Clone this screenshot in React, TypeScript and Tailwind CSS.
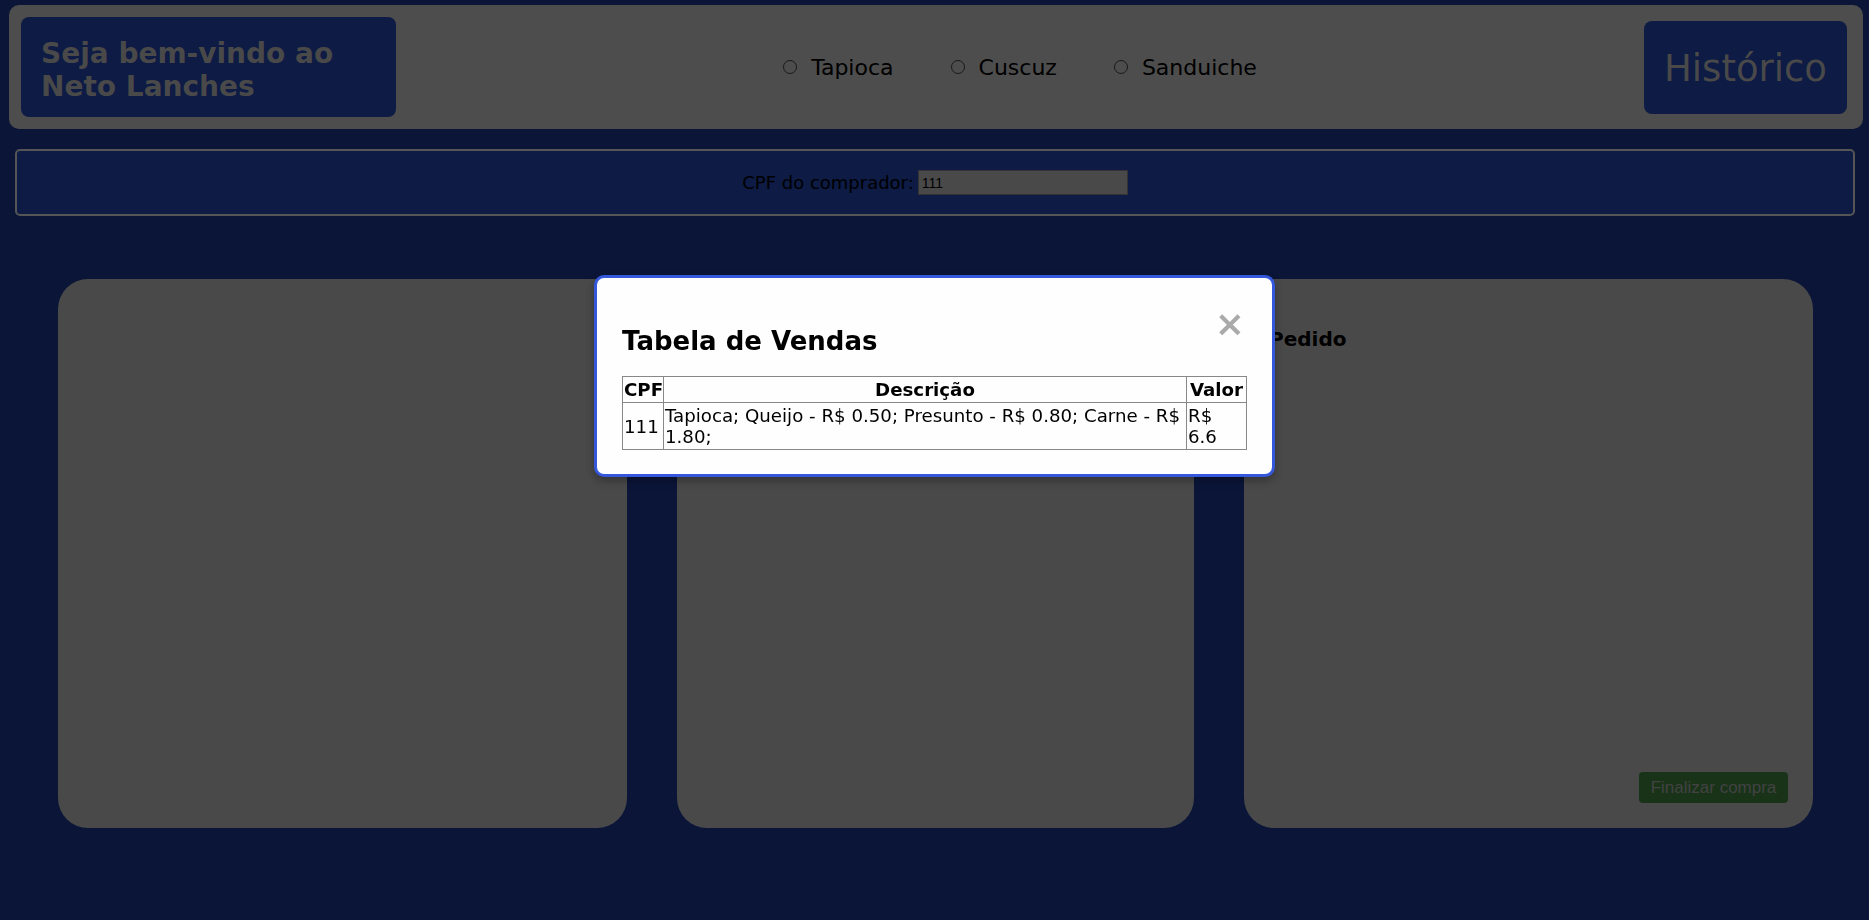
import { useState } from "react";

const LANCHES = ["Tapioca", "Cuscuz", "Sanduiche"];

interface Venda {
  cpf: string;
  descricao: string;
  valor: string;
}

const VENDAS: Venda[] = [
  {
    cpf: "111",
    descricao: "Tapioca; Queijo - R$ 0.50; Presunto - R$ 0.80; Carne - R$ 1.80;",
    valor: "R$ 6.6",
  },
];

export default function App() {
  const [lanche, setLanche] = useState<string | null>(null);
  const [cpf, setCpf] = useState("111");
  const [modalOpen, setModalOpen] = useState(true);

  return (
    <div className="relative min-h-screen bg-[#11235d] pt-[5px] font-['DejaVu_Sans',sans-serif] text-black">
      <header className="ml-[9px] mr-[6px] flex h-[124px] items-center justify-between rounded-[10px] bg-[#808080] pl-[12px] pr-[16px]">
        <div className="w-[375px] rounded-[8px] bg-[#162d73] px-[20px] pb-[14px] pt-[20px] text-[28px] font-bold leading-[33px] text-[#7a7a7a]">
          Seja bem-vindo ao Neto Lanches
        </div>

        <div className="flex items-center gap-[57px] text-[22px]">
          {LANCHES.map((l) => (
            <label key={l} className="flex items-center gap-[14px]">
              <input
                type="radio"
                name="lanche"
                checked={lanche === l}
                onChange={() => setLanche(l)}
                className="h-[14px] w-[14px] appearance-none rounded-full border border-[#2a2a2a]"
              />
              <span>{l}</span>
            </label>
          ))}
        </div>

        <button
          type="button"
          onClick={() => setModalOpen(true)}
          className="h-[93px] rounded-[8px] bg-[#162d73] px-[20px] pt-[4px] text-[37px] text-[#7a7a7a]"
        >
          Histórico
        </button>
      </header>

      <div className="ml-[15px] mr-[14px] mt-[20px] flex h-[67px] items-center justify-center rounded-[5px] border-2 border-[#8e8e8e] bg-[#162d73] text-[18px]">
        <span>CPF do comprador:</span>
        <input
          value={cpf}
          onChange={(e) => setCpf(e.target.value)}
          className="ml-[4px] h-[25px] w-[210px] border border-[#555] bg-[#7b7b7b] px-[3px] font-['Liberation_Sans',sans-serif] text-[14px] text-black outline-none"
        />
      </div>

      <div className="ml-[58px] mt-[63px] grid grid-cols-[569px_517px_569px] gap-[50px]">
        <div className="h-[549px] rounded-[30px] bg-[#7a7a7a]" />
        <div className="h-[549px] rounded-[30px] bg-[#7a7a7a]" />
        <div className="flex h-[549px] flex-col rounded-[30px] bg-[#7a7a7a] p-[25px]">
          <h3 className="mt-[24px] text-[20px] font-bold leading-[23px]">Pedido</h3>
          <button
            type="button"
            className="mt-auto h-[31px] w-[149px] self-end rounded-[4px] bg-[#2a562a] font-['Liberation_Sans',sans-serif] text-[17px] text-[#6e6e6e]"
          >
            Finalizar compra
          </button>
        </div>
      </div>

      {modalOpen && (
        <div className="fixed inset-0 bg-black/40">
          <div className="mx-auto mt-[275px] w-[681px] rounded-[10px] border-[3px] border-[#3457dc] bg-[#fefefe] px-[25px] pb-[24px] pt-[24px] shadow-[0_4px_10px_rgba(0,0,0,0.3)]">
            <div className="flex items-start justify-between">
              <h2 className="mb-[20px] mt-[24px] text-[26px] font-bold leading-[30px]">Tabela de Vendas</h2>
              <span
                onClick={() => setModalOpen(false)}
                className="mr-[2px] mt-[2px] cursor-pointer text-[36px] font-bold leading-[40px] text-[#aaa]"
              >
                ×
              </span>
            </div>

            <table className="w-full table-fixed border-collapse text-[18.2px] leading-[21px]">
              <colgroup>
                <col className="w-[41px]" />
                <col />
                <col className="w-[60px]" />
              </colgroup>
              <thead>
                <tr>
                  <th className="border border-[#888] px-[1px] py-[2px]">CPF</th>
                  <th className="border border-[#888] px-[1px] py-[2px]">Descrição</th>
                  <th className="border border-[#888] px-[1px] py-[2px]">Valor</th>
                </tr>
              </thead>
              <tbody>
                {VENDAS.map((v, i) => (
                  <tr key={i}>
                    <td className="border border-[#888] px-[1px] py-[2px]">{v.cpf}</td>
                    <td className="border border-[#888] px-[1px] py-[2px]">{v.descricao}</td>
                    <td className="border border-[#888] px-[1px] py-[2px]">{v.valor}</td>
                  </tr>
                ))}
              </tbody>
            </table>
          </div>
        </div>
      )}
    </div>
  );
}
